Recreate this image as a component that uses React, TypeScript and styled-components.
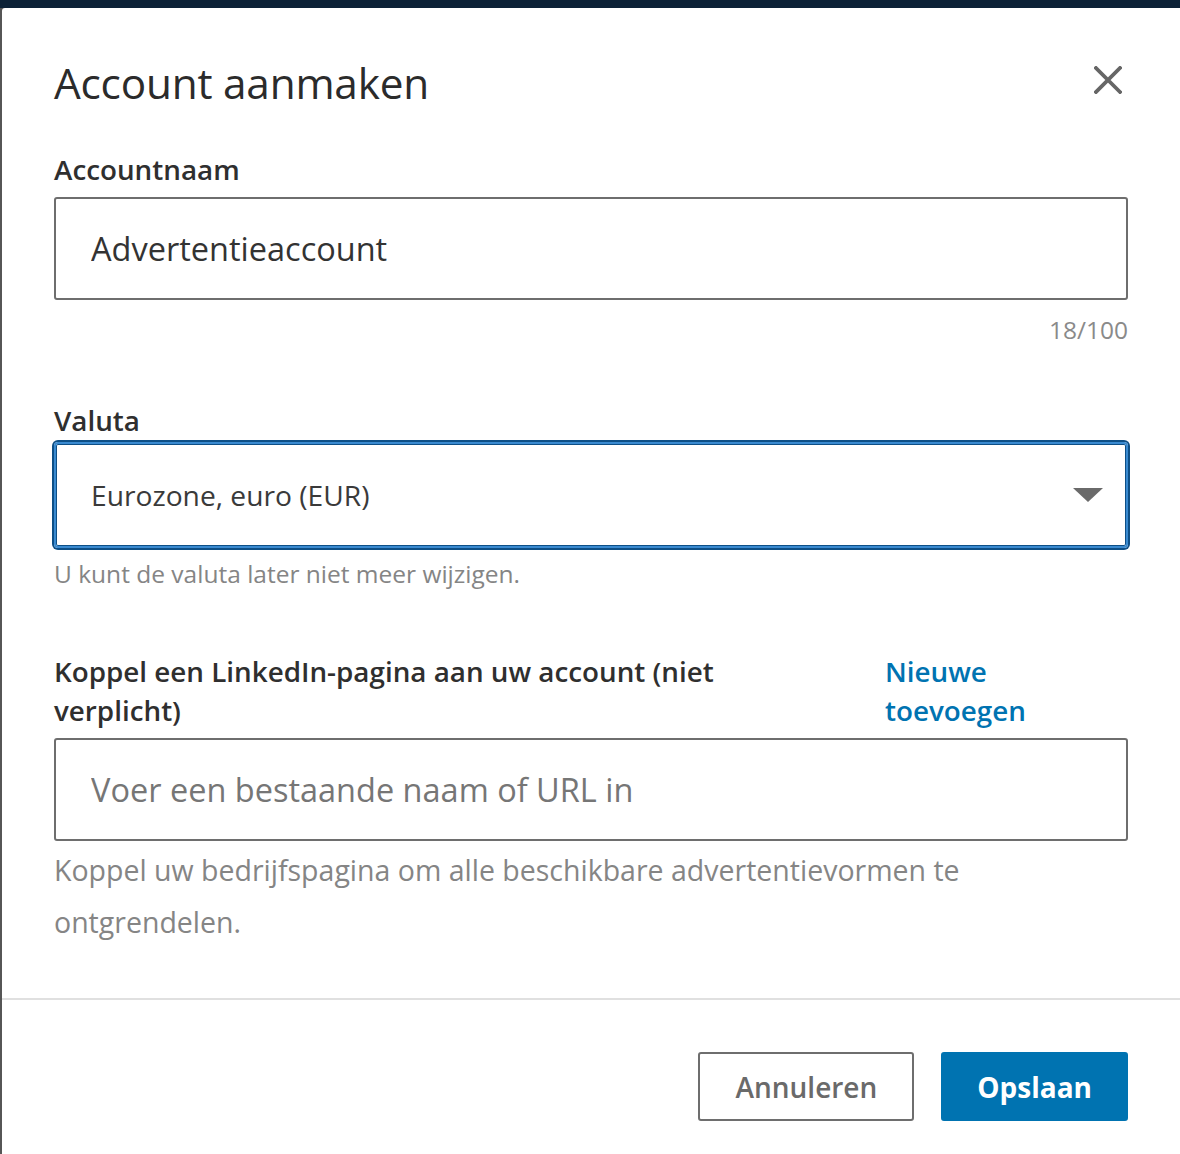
import React from "react";
import styled, { createGlobalStyle } from "styled-components";

const GlobalStyle = createGlobalStyle`
  html, body {
    margin: 0;
    padding: 0;
    background: #0c2237;
  }
  * {
    box-sizing: border-box;
  }
`;

const Page = styled.div`
  width: 1180px;
  height: 1154px;
  padding-top: 8px;
  background: #0c2237;
  overflow: hidden;
  font-family: "Open Sans", "Noto Sans", "Liberation Sans", sans-serif;
`;

const Backdrop = styled.div`
  height: 100%;
  padding-left: 2px;
  background: #565656;
`;

const Modal = styled.div`
  height: 100%;
  background: #ffffff;
  border-top-left-radius: 3px;
  display: flex;
  flex-direction: column;
`;

const Body = styled.div`
  padding: 42px 52px 0 52px;
  display: flex;
  flex-direction: column;
`;

const Header = styled.div`
  height: 64px;
  display: flex;
  align-items: center;
  justify-content: space-between;
  margin-bottom: 35px;
`;

const Title = styled.h2`
  margin: 0;
  font-size: 42.3px;
  font-weight: 400;
  color: #2b2b2b;
  letter-spacing: -0.2px;
`;

const CloseButton = styled.button`
  width: 40px;
  height: 40px;
  margin-top: -5px;
  border: none;
  background: transparent;
  padding: 0;
  display: flex;
  align-items: center;
  justify-content: center;
  cursor: pointer;
`;

const Label = styled.label`
  display: block;
  font-size: 27.8px;
  font-weight: 600;
  line-height: 40px;
  color: #2f2f2f;
`;

const LabelRow = styled.div`
  display: grid;
  grid-template-columns: 1fr 243px;
  column-gap: 24px;
  align-items: start;
`;

const PageLabel = styled(Label)`
  max-width: 760px;
  line-height: 39px;
`;

const AddLink = styled.a`
  font-size: 27.8px;
  font-weight: 600;
  line-height: 39px;
  color: #0073b1;
  text-decoration: none;
  max-width: 180px;
`;

const TextInput = styled.input<{ $top: number }>`
  display: block;
  width: 100%;
  height: 103px;
  margin-top: ${p => p.$top}px;
  padding: 0 35px;
  border: 2px solid #6e6e6e;
  border-radius: 3px;
  font-family: inherit;
  font-size: 32.5px;
  color: #333333;
  outline: none;
  &::placeholder {
    color: #767676;
  }
`;

const Counter = styled.div`
  margin-top: 15px;
  text-align: right;
  font-size: 24.5px;
  line-height: 30px;
  color: #8a8a8a;
`;

const Spaced = styled.div<{ $top: number }>`
  margin-top: ${p => p.$top}px;
`;

const SelectBox = styled.div`
  position: relative;
  margin-top: 2px;
  height: 106px;
  border: 2px solid #3a8ad0;
  border-radius: 4px;
  box-shadow: 0 0 0 2px #0e4f86, inset 0 0 0 1px #0e4f86;
  display: flex;
  align-items: center;
  padding: 0 23px 0 35px;
`;

const SelectValue = styled.span`
  flex: 1;
  font-size: 28.2px;
  color: #3a3a3a;
`;

const Caret = styled.span`
  width: 0;
  height: 0;
  border-left: 15px solid transparent;
  border-right: 15px solid transparent;
  border-top: 14px solid #6a6a6a;
`;

const Hint = styled.div<{ $size: number; $line: number; $top: number }>`
  margin-top: ${p => p.$top}px;
  max-width: 1000px;
  font-size: ${p => p.$size}px;
  line-height: ${p => p.$line}px;
  color: #858585;
`;

const Divider = styled.div`
  margin-top: 50px;
  height: 2px;
  background: #e0e0e0;
`;

const Footer = styled.div`
  padding: 52px 52px 0 52px;
  display: flex;
  justify-content: flex-end;
  gap: 27px;
`;

const Button = styled.button<{ $primary?: boolean }>`
  height: 69px;
  padding: 0 ${p => (p.$primary ? 34 : 35)}px;
  border-radius: 3px;
  font-family: inherit;
  font-size: 28px;
  font-weight: ${p => (p.$primary ? 700 : 600)};
  cursor: pointer;
  border: 2px solid ${p => (p.$primary ? "#0073b1" : "#6e6e6e")};
  background: ${p => (p.$primary ? "#0073b1" : "#ffffff")};
  color: ${p => (p.$primary ? "#ffffff" : "#6a6a6a")};
`;

const CloseIcon = () => (
  <svg width="28" height="28" viewBox="0 0 28 28">
    <path d="M2 2 L26 26 M26 2 L2 26" stroke="#666666" strokeWidth="3.8" strokeLinecap="square" />
  </svg>
);

const App: React.FC = () => {
  return (
    <Page>
      <GlobalStyle />
      <Backdrop>
        <Modal>
          <Body>
            <Header>
              <Title>Account aanmaken</Title>
              <CloseButton aria-label="Sluiten">
                <CloseIcon />
              </CloseButton>
            </Header>

            <Label>Accountnaam</Label>
            <TextInput $top={8} defaultValue="Advertentieaccount" />
            <Counter>18/100</Counter>

            <Spaced $top={55}>
              <Label>Valuta</Label>
              <SelectBox>
                <SelectValue>Eurozone, euro (EUR)</SelectValue>
                <Caret />
              </SelectBox>
              <Hint $size={24.5} $line={30} $top={11}>
                U kunt de valuta later niet meer wijzigen.
              </Hint>
            </Spaced>

            <Spaced $top={63}>
              <LabelRow>
                <PageLabel>Koppel een LinkedIn-pagina aan uw account (niet verplicht)</PageLabel>
                <AddLink href="#">Nieuwe toevoegen</AddLink>
              </LabelRow>
              <TextInput $top={8} placeholder="Voer een bestaande naam of URL in" />
              <Hint $size={28.5} $line={52} $top={3}>
                Koppel uw bedrijfspagina om alle beschikbare advertentievormen te ontgrendelen.
              </Hint>
            </Spaced>
          </Body>
          <Divider />
          <Footer>
            <Button>Annuleren</Button>
            <Button $primary>Opslaan</Button>
          </Footer>
        </Modal>
      </Backdrop>
    </Page>
  );
};

export default App;
